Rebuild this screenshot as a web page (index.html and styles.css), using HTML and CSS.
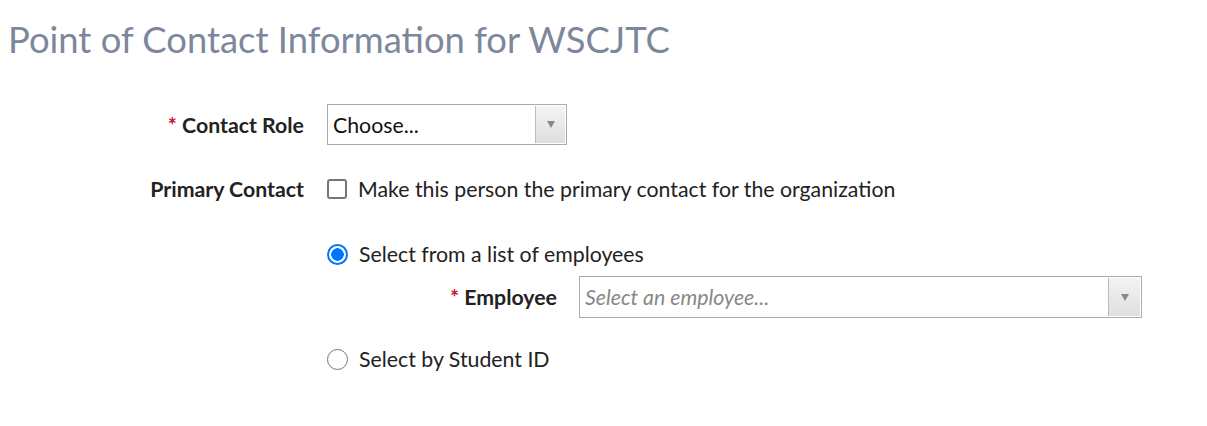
FILE: index.html
```html
<!DOCTYPE html>
<html lang="en">
<head>
<meta charset="utf-8">
<title>Point of Contact Information</title>
<link rel="stylesheet" href="styles.css">
</head>
<body>
<h1 class="page-title">Point of Contact Information for WSCJTC</h1>
<form class="form">
  <div class="row row-role">
    <label class="label"><span class="req">*</span> Contact Role</label>
    <div class="control">
      <div class="select select-role">
        <span class="select-text">Choose...</span>
        <span class="select-btn"><span class="tri"></span></span>
      </div>
    </div>
  </div>
  <div class="row row-primary">
    <label class="label">Primary Contact</label>
    <div class="control">
      <label class="check"><span class="box"></span>Make this person the primary contact for the organization</label>
    </div>
  </div>
  <div class="row row-choice">
    <div class="label"></div>
    <div class="control choices">
      <label class="check"><span class="radio on"></span>Select from a list of employees</label>
      <div class="sub-row">
        <label class="label sub-label"><span class="req">*</span> Employee</label>
        <div class="select select-emp">
          <span class="select-text placeholder">Select an employee...</span>
          <span class="select-btn"><span class="tri"></span></span>
        </div>
      </div>
      <label class="check check-last"><span class="radio"></span>Select by Student ID</label>
    </div>
  </div>
</form>
</body>
</html>
```
FILE: styles.css
```css
body {
  margin: 8px;
  background: #fff;
  font-family: "Lato", "Open Sans", sans-serif;
  color: #222;
}
.page-title {
  margin: 7px 0 0 0;
  font-size: 36.4px;
  font-weight: 400;
  color: #7d879c;
  line-height: 48px;
}
.form {
  margin-top: 41px;
  font-size: 21.3px;
  line-height: 24px;
}
.row {
  display: grid;
  grid-template-columns: 296px 1fr;
  column-gap: 23px;
  align-items: center;
}
.label {
  text-align: right;
  font-weight: 700;
  color: #222;
}
.req {
  color: #c8102e;
}
.select {
  display: flex;
  align-items: stretch;
  height: 41px;
  box-sizing: border-box;
  border: 1px solid #aaa;
  background: #fff;
}
.select-role {
  width: 240px;
}
.select-emp {
  width: 563px;
  height: 42px;
}
.select-text {
  flex: 1;
  display: flex;
  align-items: center;
  padding-left: 5px;
  color: #111;
}
.placeholder {
  color: #888;
  font-style: italic;
}
.select-btn {
  width: 29px;
  margin: 1px;
  border-left: 1px solid #bbb;
  background: linear-gradient(#f4f4f4, #dedede);
  display: flex;
  align-items: center;
  justify-content: center;
}
.select-emp .select-btn {
  width: 31px;
}
.tri {
  width: 0;
  height: 0;
  border-left: 4px solid transparent;
  border-right: 4px solid transparent;
  border-top: 7px solid #888;
}
.row-primary {
  margin-top: 32px;
}
.row-choice {
  margin-top: 41px;
}
.check {
  display: flex;
  align-items: center;
  gap: 11px;
}
.box {
  width: 20px;
  height: 20px;
  box-sizing: border-box;
  border: 2px solid #767676;
  border-radius: 3px;
}
.radio {
  width: 21px;
  height: 21px;
  box-sizing: border-box;
  border: 1.5px solid #767676;
  border-radius: 50%;
}
.radio.on {
  border: 2px solid #0075ff;
  background: radial-gradient(circle, #0075ff 0 6px, #fff 6.5px);
}
.choices {
  display: flex;
  flex-direction: column;
}
.sub-row {
  display: grid;
  grid-template-columns: 230px 563px;
  column-gap: 22px;
  align-items: center;
  margin-top: 10px;
}
.check-last {
  margin-top: 29px;
}
```
